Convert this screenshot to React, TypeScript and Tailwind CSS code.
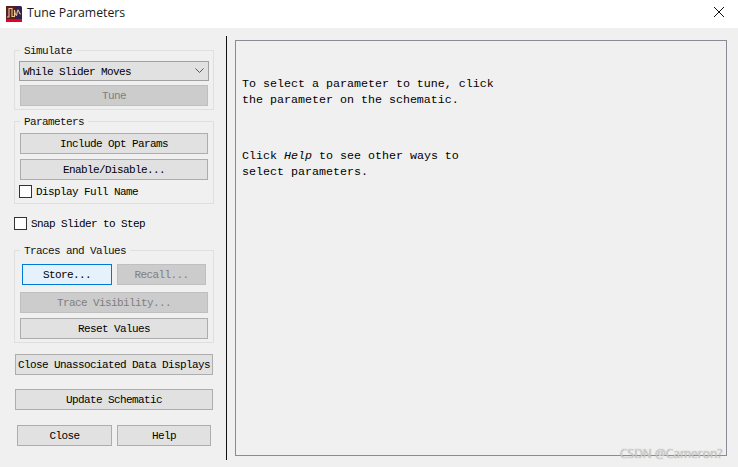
const mono = { fontFamily: '"Liberation Mono", monospace' };

function Btn({ label, disabled, focused, className }: { label: string; disabled?: boolean; focused?: boolean; className: string }) {
  let look = 'bg-[#e1e1e1] border-[#adadad] text-black';
  if (disabled) look = 'bg-[#cccccc] border-[#bfbfbf] text-[#7f7f7f]';
  if (focused) look = 'bg-[#e5f1fb] border-[#0078d7] text-black';
  return (
    <div className={`flex items-center justify-center border whitespace-nowrap pt-[2px] ${look} ${className}`}>
      {label}
    </div>
  );
}

function Group({ title, className, children }: { title: string; className: string; children: React.ReactNode }) {
  return (
    <fieldset className={`border border-[#dfdfdf] w-[200px] ${className}`}>
      <legend className="ml-[5px] px-[4px] h-[14px] leading-[16px] text-[#111111]">{title}</legend>
      {children}
    </fieldset>
  );
}

function Check({ label }: { label: string }) {
  return (
    <div className="flex items-center gap-[5px] h-[13px]">
      <div className="w-[13px] h-[13px] bg-white border border-[#333333] shrink-0" />
      <span className="text-black pt-[2px] -ml-px">{label}</span>
    </div>
  );
}

function AppIcon() {
  return (
    <svg width="16" height="16" viewBox="0 0 16 16" className="shrink-0">
      <rect width="16" height="16" rx="1.5" fill="#33204f" />
      <rect y="0" width="9" height="13" fill="#5a1f24" />
      <rect y="13" width="16" height="3" fill="#e4002b" />
      <path d="M1 11H3V2.5H6V10.5H8.5V4C9 7 9.5 9.5 10.5 9.5C11 9.5 11 4 12 4C13 4 13 8.5 15 8" fill="none" stroke="#e8c88c" strokeWidth="1.1" />
    </svg>
  );
}

export default function App() {
  return (
    <div className="relative w-[738px] h-[467px] overflow-hidden bg-[#f0f0f0] text-[11.67px]" style={mono}>
      {/* title bar */}
      <div className="flex items-center h-[28px] bg-white pl-[6px] pr-[13px]">
        <AppIcon />
        <span className="ml-[5px] mb-[2px] text-[12.25px] text-[#1a1a1a]" style={{ fontFamily: '"Open Sans", sans-serif' }}>Tune Parameters</span>
        <svg width="12" height="12" viewBox="0 0 12 12" className="ml-auto mb-[4px]">
          <path d="M1 1L11 11M11 1L1 11" stroke="#111111" strokeWidth="1" fill="none" />
        </svg>
      </div>

      <div className="flex">
        {/* left column */}
        <div className="w-[226px] pl-[14px] pt-[15px] shrink-0 text-[11px] tracking-[-0.6px]">
          <Group title="Simulate" className="h-[67px]">
            <div className="flex items-center justify-between ml-[4px] mt-[4px] w-[190px] h-[20px] bg-[#e1e1e1] border border-[#a0a0a0] pl-[3px] pr-[4px]">
              <span className="text-black pt-[2px]">While Slider Moves</span>
              <svg width="9" height="6" viewBox="0 0 9 6"><path d="M0.5 0.5L4.5 4.5L8.5 0.5" stroke="#555555" fill="none" /></svg>
            </div>
            <Btn label="Tune" disabled className="ml-[5px] mt-[4px] w-[188px] h-[21px]" />
          </Group>

          <Group title="Parameters" className="h-[90px] mt-[4px]">
            <Btn label="Include Opt Params" className="ml-[5px] mt-[5px] w-[188px] h-[21px]" />
            <Btn label="Enable/Disable..." className="ml-[5px] mt-[5px] w-[188px] h-[21px]" />
            <div className="ml-[4px] mt-[5px]"><Check label="Display Full Name" /></div>
          </Group>

          <div className="mt-[13px]"><Check label="Snap Slider to Step" /></div>

          <Group title="Traces and Values" className="h-[100px] mt-[13px]">
            <div className="flex gap-[5px] ml-[7px] mt-[7px]">
              <Btn label="Store..." focused className="w-[90px] h-[21px]" />
              <Btn label="Recall..." disabled className="w-[89px] h-[21px]" />
            </div>
            <Btn label="Trace Visibility..." disabled className="ml-[5px] mt-[7px] w-[188px] h-[21px]" />
            <Btn label="Reset Values" className="ml-[5px] mt-[5px] w-[188px] h-[21px]" />
          </Group>

          <Btn label="Close Unassociated Data Displays" className="ml-[1px] mt-[11px] w-[198px] h-[21px]" />
          <Btn label="Update Schematic" className="ml-[1px] mt-[14px] w-[198px] h-[21px]" />
          <div className="flex gap-[5px] ml-[3px] mt-[15px]">
            <Btn label="Close" className="w-[95px] h-[21px]" />
            <Btn label="Help" className="w-[94px] h-[21px]" />
          </div>
        </div>

        {/* divider */}
        <div className="w-px h-[424px] mt-[8px] bg-[#111111] shrink-0" />

        {/* message panel */}
        <div className="w-[492px] h-[416px] mt-[12px] ml-[8px] border border-[#8a8a98] pl-[6px] pt-[35px] leading-[16px] text-black">
          <p>To select a parameter to tune, click</p>
          <p>the parameter on the schematic.</p>
          <p className="mt-[40px]">Click <em className="italic">Help</em> to see other ways to</p>
          <p>select parameters.</p>
        </div>
      </div>

      {/* watermark */}
      <span className="absolute left-[620px] top-[447px] text-[12px] leading-[14px] text-[#d4d4d4]" style={{ fontFamily: '"Open Sans", sans-serif', textShadow: '0 0 1px #8f8f8f' }}>CSDN @Cameron?</span>
    </div>
  );
}
